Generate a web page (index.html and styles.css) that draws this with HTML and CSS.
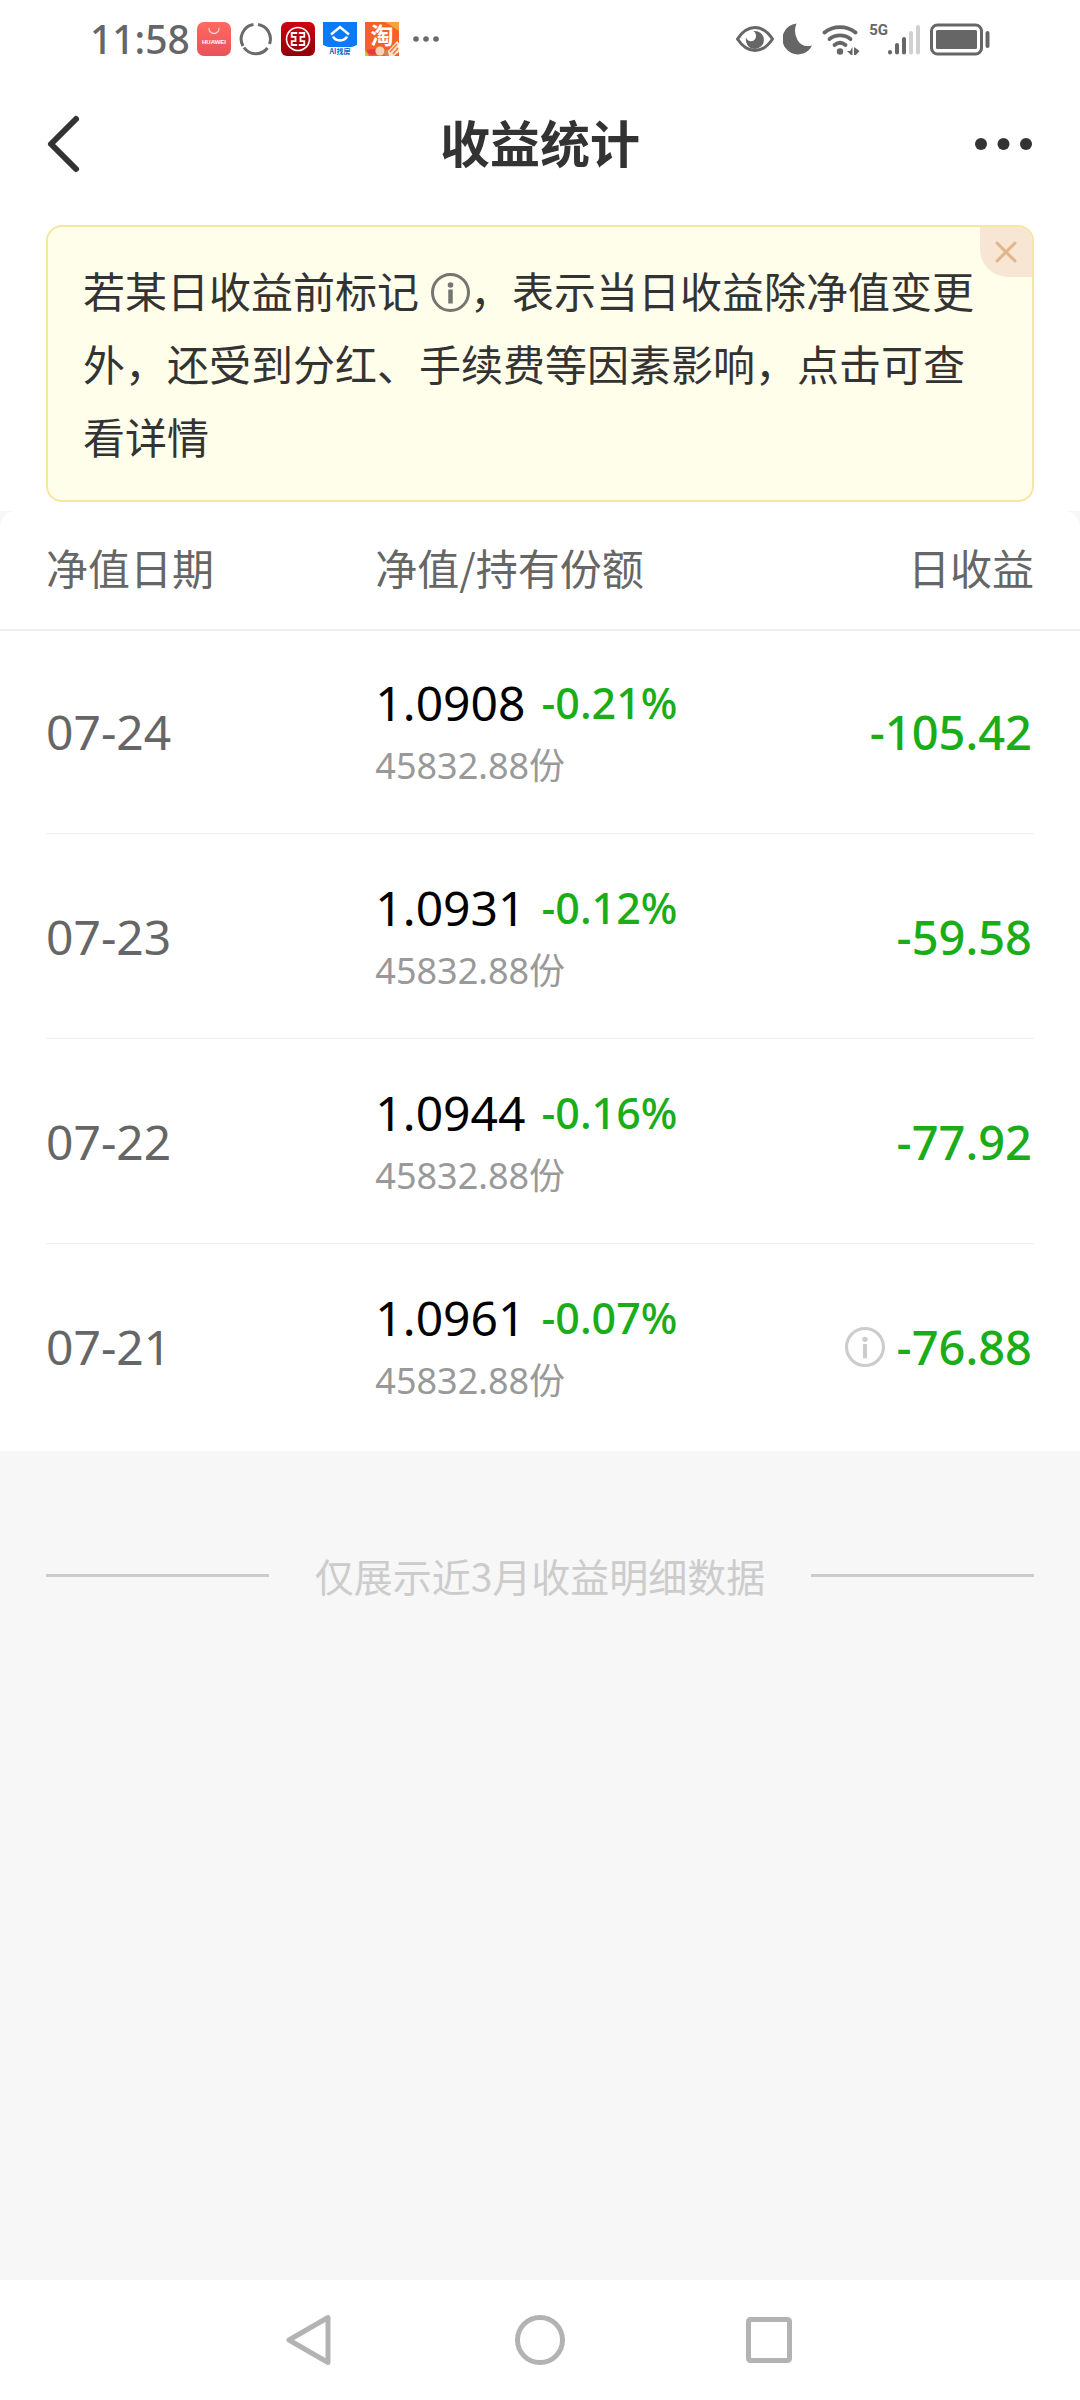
FILE: index.html
```html
<!DOCTYPE html>
<html lang="zh-CN">
<head>
<meta charset="utf-8">
<meta name="viewport" content="width=device-width, initial-scale=1">
<title>收益统计</title>
<link rel="stylesheet" href="styles.css">
</head>
<body>
<div class="screen">
  <div class="status-bar">
    <div class="status-left">
      <time class="clock">11:58</time>
      <div class="app-icons">
        <svg width="34" height="34" viewBox="0 0 34 34" aria-hidden="true">
          <defs><linearGradient id="hw" x1="0" y1="0" x2="0" y2="1"><stop offset="0" stop-color="#ff6a60"/><stop offset="1" stop-color="#e9525a"/></linearGradient></defs>
          <rect width="34" height="34" rx="7" fill="url(#hw)"/>
          <path d="M12 6.500a5 5 0 0 0 10 0" fill="none" stroke="#ffd3cf" stroke-width="1.300" stroke-linecap="round"/>
          <text x="17" y="22" class="icon-brand">HUAWEI</text>
        </svg>
        <svg width="34" height="34" viewBox="0 0 34 34" aria-hidden="true">
          <g fill="none" stroke="#6a6a6a" stroke-width="3">
            <path d="M19 2.600A14.500 14.500 0 0 1 30.500 22"/>
            <path d="M28.500 26A14.500 14.500 0 0 1 5 25.500"/>
            <path d="M4 24A14.500 14.500 0 0 1 14.500 2.600"/>
          </g>
        </svg>
        <svg width="34" height="34" viewBox="0 0 34 34" aria-hidden="true">
          <defs><linearGradient id="bk" x1="0" y1="0" x2="0" y2="1"><stop offset="0" stop-color="#cf0010"/><stop offset="1" stop-color="#8f0008"/></linearGradient></defs>
          <rect width="34" height="34" rx="6" fill="url(#bk)"/>
          <circle cx="17" cy="17" r="11.500" fill="none" stroke="#fff" stroke-width="1.600"/>
          <path d="M16.200 11h-5.500v3.800h3.800v4.400h-3.800V23h5.500M17.800 11h5.500v3.800h-3.800v4.400h3.800V23h-5.500" fill="none" stroke="#fff" stroke-width="1.800"/>
        </svg>
        <svg width="34" height="34" viewBox="0 0 34 34" aria-hidden="true">
          <path d="M0 0h34v23l-5 2H5l-5-2z" fill="#0a7bf5"/>
          <path d="M8 12.500l9-7.500 9 7.500" fill="none" stroke="#fff" stroke-width="2.400"/>
          <path d="M10 14.500a7.500 6 0 0 0 14 0" fill="none" stroke="#fff" stroke-width="2.600"/>
          <text x="17" y="32" class="icon-caption">AI找房</text>
        </svg>
        <svg width="34" height="34" viewBox="0 0 34 34" overflow="visible" aria-hidden="true">
          <rect width="34" height="34" fill="#f4622a"/>
          <path d="M20 0h14v9z" fill="#f9a13a"/>
          <text x="17" y="22" class="icon-glyph">淘</text>
          <path d="M0 28l4 6H0z" fill="#b4d433"/>
          <path d="M2 28a6 5 0 0 0 9 4l-1-5z" fill="#e8354a"/>
          <circle cx="15" cy="29" r="4.500" fill="#f6d3b4"/>
          <circle cx="22" cy="31" r="3" fill="#c98a62"/>
          <path d="M23 29l9-10 2 2v9l-5 4h-5z" fill="#fbe3cf"/>
          <path d="M25 30l7-8M28 32l5-6" stroke="#ef7d3c" stroke-width="1.500"/>
        </svg>
      </div>
      <svg class="more-apps" width="26" height="8" viewBox="0 0 26 8" fill="#6a6a6a" aria-hidden="true"><circle cx="3" cy="4" r="2.800"/><circle cx="13" cy="4" r="2.800"/><circle cx="23" cy="4" r="2.800"/></svg>
    </div>
    <div class="status-right">
      <svg width="38" height="34" viewBox="0 0 38 34" aria-hidden="true">
        <path d="M1.500 17Q9 5.500 19 5.500T36.500 17Q29 28.500 19 28.500T1.500 17z" fill="none" stroke="#666" stroke-width="3"/>
        <path d="M17.500 9a9 9 0 1 1-7.300 6.500 5 5 0 0 0 9 1.500 6 6 0 0 0-1.700-8z" fill="#666"/>
      </svg>
      <svg width="30" height="34" viewBox="0 0 30 34" aria-hidden="true"><path d="M13.500 1.500A15.500 15.500 0 1 0 29 23.500Q19 26 14.500 18T13.500 1.500z" fill="#666"/></svg>
      <svg width="38" height="34" viewBox="0 0 38 34" aria-hidden="true">
        <g fill="none" stroke="#666" stroke-width="3.800" stroke-linecap="round"><path d="M2.500 10.500a25 25 0 0 1 31 0"/><path d="M7.500 17a17 17 0 0 1 21 0"/><path d="M12.500 23q5.500-4.500 11 0"/></g>
        <circle cx="18" cy="29.500" r="3.200" fill="#666"/>
        <path d="M30.500 25v8h-1.500l-4-4h3zM32 33v-8l5.500 4-3.500 4z" fill="#666"/>
      </svg>
      <div class="signal">
        <span class="network">5G</span>
        <svg width="34" height="34" viewBox="0 0 34 34" stroke-width="4" stroke-linecap="round" aria-hidden="true">
          <path d="M3 30v.500M10 23v7.500M17 17v13.500" stroke="#666"/><path d="M24 11v19.500M31 5v25.500" stroke="#d0d0d0"/>
        </svg>
      </div>
      <svg width="60" height="34" viewBox="0 0 60 34" aria-hidden="true">
        <rect x="1.500" y="3" width="50" height="29" rx="6" fill="none" stroke="#666" stroke-width="3"/>
        <rect x="6" y="8" width="41" height="19" rx="1.500" fill="#666"/>
        <path d="M57.500 11v13" stroke="#666" stroke-width="4" stroke-linecap="round"/>
      </svg>
    </div>
  </div>

  <header class="title-bar">
    <button class="icon-button" type="button" aria-label="返回">
      <svg width="36" height="60" viewBox="0 0 36 60" fill="none" stroke="#333" stroke-width="6" stroke-linecap="round" stroke-linejoin="round"><path d="M30 5L5 30l25 25"/></svg>
    </button>
    <h1 class="title">收益统计</h1>
    <button class="icon-button icon-button-end" type="button" aria-label="更多">
      <svg width="60" height="60" viewBox="0 0 60 60" fill="#333"><circle cx="7" cy="30" r="6"/><circle cx="29.500" cy="30" r="6"/><circle cx="52" cy="30" r="6"/></svg>
    </button>
  </header>

  <div class="notice-area">
    <div class="notice">
      <p class="notice-text">若某日收益前标记<svg class="info-inline" width="39" height="39" viewBox="0 0 39 39" role="img" aria-label="说明"><circle cx="19.500" cy="19.500" r="18" fill="none" stroke="#757571" stroke-width="3"/><circle cx="19.500" cy="12" r="2.800" fill="#757571"/><path d="M19.500 16.500v14" stroke="#757571" stroke-width="4.500"/></svg>，表示当日收益除净值变更外，还受到分红、手续费等因素影响，点击可查看详情</p>
      <button class="notice-close" type="button" aria-label="关闭">
        <svg width="24" height="24" viewBox="0 0 24 24" stroke="#e3b488" stroke-width="3" stroke-linecap="round"><path d="M3 3l18 18M21 3L3 21"/></svg>
      </button>
    </div>
  </div>

  <main class="content">
    <table class="earnings">
      <thead>
        <tr><th scope="col">净值日期</th><th scope="col">净值/持有份额</th><th scope="col" class="profit">日收益</th></tr>
      </thead>
      <tbody>
        <tr>
          <td class="date">07-24</td>
          <td><div class="nav-line"><span class="nav">1.0908</span><span class="change">-0.21%</span></div><div class="shares">45832.88份</div></td>
          <td class="profit">-105.42</td>
        </tr>
        <tr>
          <td class="date">07-23</td>
          <td><div class="nav-line"><span class="nav">1.0931</span><span class="change">-0.12%</span></div><div class="shares">45832.88份</div></td>
          <td class="profit">-59.58</td>
        </tr>
        <tr>
          <td class="date">07-22</td>
          <td><div class="nav-line"><span class="nav">1.0944</span><span class="change">-0.16%</span></div><div class="shares">45832.88份</div></td>
          <td class="profit">-77.92</td>
        </tr>
        <tr>
          <td class="date">07-21</td>
          <td><div class="nav-line"><span class="nav">1.0961</span><span class="change">-0.07%</span></div><div class="shares">45832.88份</div></td>
          <td class="profit">
            <button class="info-button" type="button" aria-label="查看收益详情"><svg width="40" height="40" viewBox="0 0 39 39"><circle cx="19.500" cy="19.500" r="18" fill="none" stroke="#ccc" stroke-width="3"/><circle cx="19.500" cy="12" r="2.600" fill="#ccc"/><path d="M19.500 16.500v14" stroke="#ccc" stroke-width="4"/></svg></button>-76.88
          </td>
        </tr>
      </tbody>
    </table>
    <p class="end-note">仅展示近3月收益明细数据</p>
  </main>

  <nav class="system-nav" aria-label="系统导航">
    <button type="button" aria-label="返回"><svg width="54" height="54" viewBox="0 0 54 54"><path d="M45 4.500v45L6 27z"/></svg></button>
    <button type="button" aria-label="主页"><svg width="54" height="54" viewBox="0 0 54 54"><circle cx="27" cy="27" r="22.500"/></svg></button>
    <button type="button" aria-label="最近任务"><svg width="54" height="54" viewBox="0 0 54 54"><rect x="5.500" y="6.500" width="41" height="41" rx="2"/></svg></button>
  </nav>
</div>
</body>
</html>
```
FILE: styles.css
```css
* {
  box-sizing: border-box;
}

body {
  margin: 0;
  background: #f7f7f7;
  color: #333;
  font-family: "Noto Sans", "Noto Sans CJK SC", sans-serif;
}

button {
  margin: 0;
  padding: 0;
  border: 0;
  background: none;
  cursor: pointer;
}

svg {
  display: block;
  flex: none;
}

.screen {
  display: flex;
  flex-direction: column;
  min-height: 100vh;
}

/* Status bar */
.status-bar {
  display: flex;
  justify-content: space-between;
  align-items: center;
  height: 80px;
  padding: 0 90px 2px;
  background: #fff;
  color: #666;
}

.status-left,
.status-right,
.app-icons {
  display: flex;
  align-items: center;
}

.status-left {
  gap: 7px;
}

.app-icons {
  gap: 8px;
}

.more-apps {
  margin-left: 7px;
}

.status-right {
  gap: 9px;
}

.clock {
  font-size: 39px;
  font-weight: 500;
  line-height: 40px;
}

.signal {
  display: flex;
  align-items: flex-start;
}

.network {
  margin-right: -1px;
  font-family: Roboto, sans-serif;
  font-size: 15px;
  font-weight: 700;
  line-height: 16px;
}

.icon-brand {
  fill: #fff;
  font: 700 6px "Liberation Sans", sans-serif;
  text-anchor: middle;
}

.icon-caption {
  fill: #0a5fc0;
  font: 700 7px "Noto Sans CJK SC", sans-serif;
  text-anchor: middle;
}

.icon-glyph {
  fill: #fff;
  font: 700 23px "Noto Sans CJK SC", sans-serif;
  text-anchor: middle;
}

/* Title bar */
.title-bar {
  display: grid;
  grid-template-columns: 1fr auto 1fr;
  align-items: center;
  height: 128px;
  padding: 0 46px;
  background: #fff;
}

.icon-button {
  justify-self: start;
}

.icon-button-end {
  justify-self: end;
}

.title {
  margin: 0;
  padding-bottom: 6px;
  font-family: "Noto Sans CJK SC", sans-serif;
  font-size: 50px;
  font-weight: 700;
  line-height: 60px;
}

/* Notice */
.notice-area {
  padding: 17px 46px 9px;
  background: #fff;
}

.notice {
  position: relative;
  padding: 26px 35px 28px;
  overflow: hidden;
  border: 2px solid #f5e6a0;
  border-radius: 16px;
  background: #fffeeb;
}

.notice-text {
  margin: 0;
  font-family: "Noto Sans CJK SC", sans-serif;
  font-size: 42px;
  line-height: 73px;
}

.info-inline {
  display: inline-block;
  margin-left: 12px;
  vertical-align: -4px;
}

.notice-close {
  position: absolute;
  top: 0;
  right: 0;
  display: grid;
  place-items: center;
  width: 52px;
  height: 50px;
  border-bottom-left-radius: 28px;
  background: #f8e6d5;
}

/* Earnings table */
.content {
  flex: 1;
}

.earnings {
  display: block;
  padding-bottom: 2px;
  border-radius: 16px 16px 0 0;
  background: #fff;
}

.earnings thead,
.earnings tbody {
  display: block;
}

.earnings tr {
  display: grid;
  grid-template-columns: repeat(3, 1fr);
  align-items: center;
}

.earnings thead tr {
  height: 118px;
  padding: 0 46px;
  box-shadow: 0 2px 0 #efefef;
}

.earnings tbody tr {
  height: 205px;
  margin: 0 46px;
  border-bottom: 1px solid #eee;
}

.earnings tbody tr:last-child {
  border-bottom-color: transparent;
}

.earnings th,
.earnings td {
  padding: 0;
  text-align: left;
}

.earnings th {
  padding-bottom: 6px;
  color: #666;
  font-family: "Noto Sans CJK SC", sans-serif;
  font-size: 42px;
  font-weight: 400;
  line-height: 60px;
}

.earnings .date {
  padding-top: 2px;
  color: #666;
  font-size: 48px;
  line-height: 60px;
}

.earnings td:nth-child(2) {
  padding-top: 6px;
}

.nav-line {
  display: flex;
  align-items: center;
  gap: 16px;
}

.nav {
  color: #000;
  font-size: 48px;
  line-height: 64px;
}

.change {
  color: #1aad19;
  font-size: 43px;
  font-weight: 500;
  line-height: 64px;
}

.shares {
  color: #999;
  font-size: 36px;
  line-height: 62px;
}

.earnings .profit {
  display: flex;
  justify-content: flex-end;
  align-items: center;
  gap: 12px;
}

.earnings td.profit {
  padding: 2px 2px 0 0;
  color: #1aad19;
  font-size: 47px;
  font-weight: 500;
  line-height: 60px;
}

/* End of list */
.end-note {
  display: flex;
  align-items: center;
  gap: 46px;
  margin: 0;
  padding: 94px 46px;
  color: #ccc;
  font-family: "Noto Sans CJK SC", sans-serif;
  font-size: 39px;
  line-height: 60px;
}

.end-note::before,
.end-note::after {
  content: "";
  flex: 1;
  height: 3px;
  background: #ccc;
}

/* System navigation */
.system-nav {
  display: grid;
  grid-template-columns: repeat(3, 230px);
  justify-content: center;
  height: 120px;
  background: #fff;
}

.system-nav button {
  display: grid;
  place-items: center;
}

.system-nav svg {
  fill: none;
  stroke: #b3b3b3;
  stroke-width: 5;
  stroke-linejoin: round;
}
```
